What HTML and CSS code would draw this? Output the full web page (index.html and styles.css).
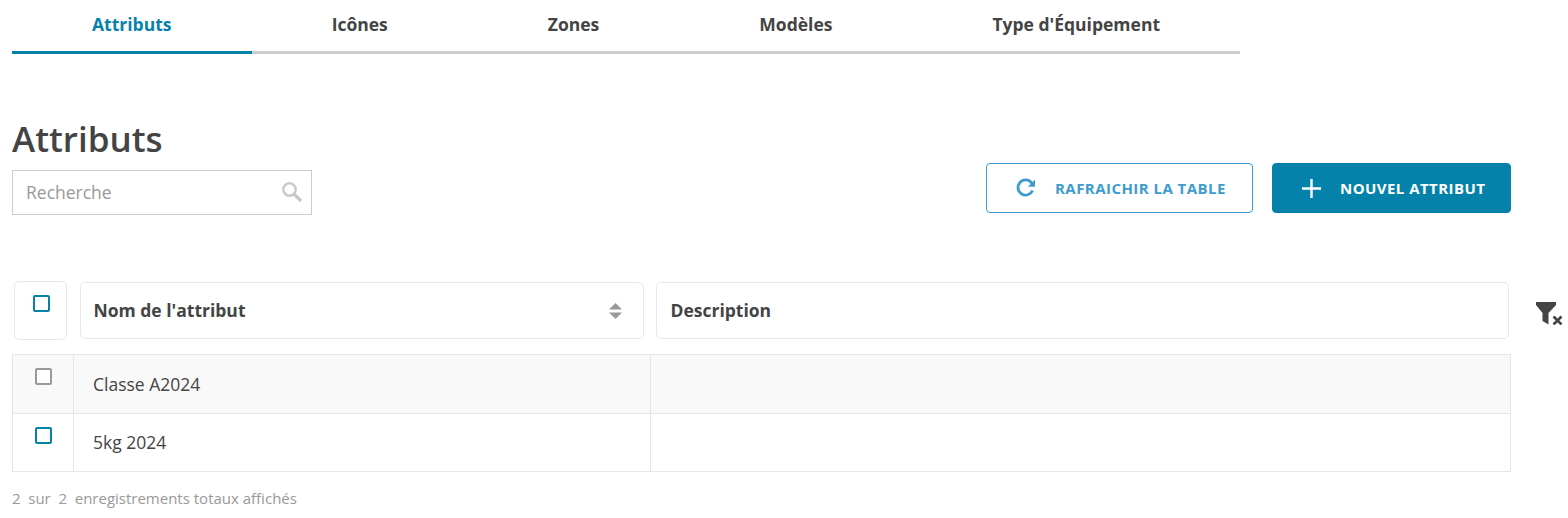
FILE: index.html
```html
<!DOCTYPE html>
<html lang="fr">
<head>
<meta charset="utf-8">
<title>Attributs</title>
<link rel="stylesheet" href="styles.css">
</head>
<body>
<nav class="tabs">
  <a class="tab active">Attributs</a>
  <a class="tab">Icônes</a>
  <a class="tab">Zones</a>
  <a class="tab">Modèles</a>
  <a class="tab">Type d'Équipement</a>
</nav>
<section class="toolbar">
  <div class="heading">
    <h1>Attributs</h1>
    <div class="search">
      <span class="placeholder">Recherche</span>
      <svg class="search-icon" viewBox="0 0 22 22" width="22" height="22"><circle cx="8.500" cy="8.500" r="6.200" fill="none" stroke="#c8c8c8" stroke-width="2.400"/><path d="M13 13l7 7" stroke="#c8c8c8" stroke-width="3.200" fill="none"/></svg>
    </div>
  </div>
  <div class="actions">
    <button class="btn btn-outline">
      <svg viewBox="0 0 22 22" width="22" height="22"><path d="M17.600 13.500A7.600 7.600 0 1 1 16.400 5.600L18 7.400" fill="none" stroke="#3d9bd0" stroke-width="2.800"/><path d="M20 2.600V9.800H12.800Z" fill="#3d9bd0"/></svg>
      <span>RAFRAICHIR LA TABLE</span>
    </button>
    <button class="btn btn-solid">
      <svg viewBox="0 0 19 19" width="19" height="19"><path d="M9.500 0V19M0 9.500H19" stroke="#fff" stroke-width="2.400"/></svg>
      <span>NOUVEL ATTRIBUT</span>
    </button>
  </div>
</section>
<section class="table-head">
  <div class="hcell hcheck"><span class="check"></span></div>
  <div class="hcell hname"><span class="hlabel">Nom de l'attribut</span>
    <svg viewBox="0 0 14 17" width="13" height="16"><path d="M7 0L14 7H0Z" fill="#999"/><path d="M0 10H14L7 17Z" fill="#999"/></svg>
  </div>
  <div class="hcell hdesc"><span class="hlabel">Description</span></div>
  <svg class="filter" viewBox="0 0 27 23" width="27" height="23"><path d="M0 0H20V3L12.500 11V22.500L6.500 19V11L0 3Z" fill="#444"/><path d="M17.500 14.500l8 8M25.500 14.500l-8 8" stroke="#444" stroke-width="2.600" fill="none"/></svg>
</section>
<section class="rows">
  <div class="row odd">
    <div class="cell ccheck"><span class="check gray"></span></div>
    <div class="cell cname">Classe A2024</div>
    <div class="cell cdesc"></div>
  </div>
  <div class="row">
    <div class="cell ccheck"><span class="check"></span></div>
    <div class="cell cname">5kg 2024</div>
    <div class="cell cdesc"></div>
  </div>
</section>
<p class="summary"><span>2</span><span>sur</span><span>2</span><span>enregistrements totaux affichés</span></p>
</body>
</html>
```
FILE: styles.css
```css
* { box-sizing: border-box; }
html, body { margin: 0; padding: 0; }
body {
  width: 1568px;
  height: 518px;
  overflow: hidden;
  padding-left: 12px;
  font-family: "Open Sans", sans-serif;
  color: #444;
  background: #fff;
}
.tabs {
  display: flex;
  width: 1228px;
  height: 54px;
  border-bottom: 3px solid #ccc;
}
.tab {
  height: 54px;
  padding: 12px 80px 0;
  font-size: 17.500px;
  line-height: 24px;
  font-weight: 700;
  color: #444;
  white-space: nowrap;
}
.tab.active {
  width: 240px;
  color: #0582aa;
  border-bottom: 3px solid #0582aa;
}
.toolbar {
  display: flex;
  justify-content: space-between;
  width: 1499px;
  margin-top: 62px;
}
h1 {
  margin: 0;
  font-size: 35px;
  line-height: 46px;
  font-weight: 600;
  color: #444;
}
.search {
  display: flex;
  align-items: center;
  justify-content: space-between;
  width: 300px;
  height: 45px;
  margin-top: 8px;
  padding: 0 8px 0 13px;
  border: 1px solid #ccc;
}
.placeholder { font-size: 17.500px; color: #999; margin-bottom: 2px; }
.search-icon { margin-top: -2px; }
.actions {
  display: flex;
  gap: 19px;
  margin-top: 47px;
}
.btn {
  display: flex;
  align-items: center;
  height: 50px;
  border-radius: 4px;
  font-family: inherit;
  font-size: 15px;
  font-weight: 700;
  letter-spacing: 0.450px;
  white-space: nowrap;
}
.btn-outline {
  width: 267px;
  padding: 0 0 0 28px;
  gap: 18px;
  background: #fff;
  border: 1px solid #3d9bd0;
  color: #3d9bd0;
}
.btn-solid {
  width: 239px;
  padding: 0 0 0 29px;
  gap: 19px;
  background: #0582aa;
  border: 1px solid #0582aa;
  color: #fff;
}
.table-head {
  display: flex;
  align-items: center;
  height: 59px;
  margin-top: 66px;
  padding-left: 2px;
}
.hcell {
  display: flex;
  align-items: center;
  height: 57px;
  border: 1px solid #e8e8e8;
  border-radius: 5px;
  font-size: 17.500px;
  font-weight: 700;
  color: #444;
}
.hlabel { margin-bottom: 2px; }
.hcheck {
  width: 53px;
  height: 59px;
  margin-right: 13px;
  padding: 13px 0 0 17.500px;
  align-items: flex-start;
}
.hname {
  width: 564px;
  margin-right: 12px;
  padding: 0 21px 0 12.500px;
  justify-content: space-between;
}
.hdesc {
  width: 853px;
  padding-left: 13.500px;
}
.filter { margin: 6px 0 0 27px; }
.check {
  display: block;
  width: 17px;
  height: 17px;
  border: 2px solid #0582aa;
  border-radius: 2px;
  background: #fff;
}
.check.gray { border-color: #999; }
.rows {
  width: 1499px;
  margin-top: 14px;
  border: 1px solid #e6e6e6;
}
.row {
  display: flex;
  height: 57px;
}
.row.odd {
  height: 59px;
  background: #f9f9f9;
  border-bottom: 1px solid #e6e6e6;
}
.cell {
  font-size: 17.500px;
  line-height: 22px;
  color: #444;
}
.ccheck {
  width: 61px;
  padding: 13px 0 0 22px;
  border-right: 1px solid #e6e6e6;
}
.cname {
  width: 577px;
  padding: 18px 0 0 19px;
  border-right: 1px solid #e6e6e6;
}
.row:not(.odd) .cname { padding-top: 17px; }
.cdesc { flex: 1; }
.summary {
  display: flex;
  gap: 7.700px;
  margin: 16px 0 0;
  font-size: 15px;
  line-height: 20px;
  color: #999;
}
```
